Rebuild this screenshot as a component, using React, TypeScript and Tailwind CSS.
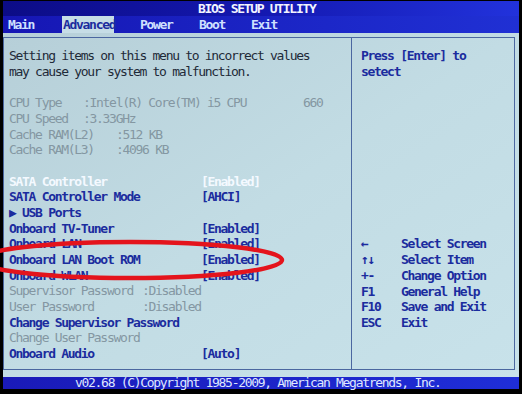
import React from 'react';

const font = "font-['DejaVu_Sans_Mono','Liberation_Mono',monospace] text-[13px] tracking-[-1.3px]";

const Row: React.FC<{ label: string; value?: string; tone?: 'blue' | 'gray' | 'white' }> = ({ label, value, tone = 'blue' }) => {
    const color =
        tone === 'white' ? 'text-[#f4f9ff] font-bold' : tone === 'gray' ? 'text-[#8497a2]' : 'text-[#1b2c9e] font-bold';
    return (
        <div className={`flex h-[15.7px] items-center whitespace-pre ${color}`}>
            <span className="w-[192px]">{label}</span>
            {value && <span>{value}</span>}
        </div>
    );
};

const InfoRow: React.FC<{ label: string; value: string; labelW: string; extra?: string }> = ({ label, value, labelW, extra }) => (
    <div className="flex h-[15.7px] items-center whitespace-pre text-[#8497a2]">
        <span className={labelW}>{label}</span>
        <span className={extra ? 'w-[220px]' : ''}>{value}</span>
        {extra && <span>{extra}</span>}
    </div>
);

const helpKeys: [string, string][] = [
    ['←', 'Select Screen'],
    ['↑↓', 'Select Item'],
    ['+-', 'Change Option'],
    ['F1', 'General Help'],
    ['F10', 'Save and Exit'],
    ['ESC', 'Exit'],
];

export default function App() {
    return (
        <div className={`relative w-[522px] h-[394px] bg-black overflow-hidden ${font}`}>
            <div className="ml-[3px] w-[516px] pt-[1px] flex flex-col">
                {/* title */}
                <div className="h-[15px] bg-gradient-to-r from-[#0c0c86] via-[#1418b0] to-[#2232dc] flex items-center pl-[195px] text-[#f2f4ff] font-bold">
                    BIOS SETUP UTILITY
                </div>
                {/* menu */}
                <div className="h-[17px] bg-gradient-to-r from-[#1616b4] to-[#2030d4] flex items-stretch text-[#cfe0ff] font-bold">
                    <span className="w-[59px] pl-[5px] flex items-center">Main</span>
                    <span className="w-[78px] flex items-stretch">
                        <span className="bg-[#c6dde6] text-[#1b2c9e] px-[1px] flex items-center w-[52px]">Advanced</span>
                    </span>
                    <span className="w-[59px] flex items-center">Power</span>
                    <span className="w-[52px] flex items-center">Boot</span>
                    <span className="flex items-center">Exit</span>
                </div>
                {/* body */}
                <div className="h-[344px] bg-gradient-to-br from-[#b6cfd8] via-[#c2dce4] to-[#c8e2ea] pt-[4px] pr-[4px]">
                    <div className="h-[333px] border border-[#4b67a0] flex">
                        <div className="w-[348px] border-r border-[#4b67a0] pl-[5px] pt-[10px]">
                            <div className="text-[#1e2a38]">
                                <div className="h-[15.7px] flex items-center whitespace-pre">Setting items on this menu to incorrect values</div>
                                <div className="h-[15.7px] flex items-center whitespace-pre">may cause your system to malfunction.</div>
                            </div>
                            <div className="h-[15.7px]" />
                            <InfoRow label="CPU Type" value=":Intel(R) Core(TM) i5 CPU" labelW="w-[74px]" extra="660" />
                            <InfoRow label="CPU Speed" value=":3.33GHz" labelW="w-[74px]" />
                            <InfoRow label="Cache RAM(L2)" value=":512 KB" labelW="w-[107px]" />
                            <InfoRow label="Cache RAM(L3)" value=":4096 KB" labelW="w-[107px]" />
                            <div className="h-[15.7px]" />
                            <Row label="SATA Controller" value="[Enabled]" tone="white" />
                            <Row label="SATA Controller Mode" value="[AHCI]" />
                            <Row label="▶ USB Ports" />
                            <Row label="Onboard TV-Tuner" value="[Enabled]" />
                            <Row label="Onboard LAN" value="[Enabled]" />
                            <Row label="Onboard LAN Boot ROM" value="[Enabled]" />
                            <Row label="Onboard WLAN" value="[Enabled]" />
                            <InfoRow label="Supervisor Password" value=":Disabled" labelW="w-[133px]" />
                            <InfoRow label="User Password" value=":Disabled" labelW="w-[133px]" />
                            <Row label="Change Supervisor Password" />
                            <Row label="Change User Password" tone="gray" />
                            <Row label="Onboard Audio" value="[Auto]" />
                        </div>
                        <div className="flex-1 pl-[9px] pt-[10px] text-[#1b2c9e] font-bold">
                            <div className="h-[15.7px] flex items-center whitespace-pre">Press [Enter] to</div>
                            <div className="h-[15.7px] flex items-center">setect</div>
                            <div className="h-[157px]" />
                            {helpKeys.map(([k, v]) => (
                                <div key={k} className="h-[15.7px] flex items-center whitespace-pre">
                                    <span className="w-[40px]">{k}</span>
                                    <span>{v}</span>
                                </div>
                            ))}
                        </div>
                    </div>
                </div>
                {/* footer */}
                <div className="h-[12px] bg-gradient-to-r from-[#1a1ab8] to-[#1f2ed8] flex items-center pl-[72px] text-[#dfe6ff] whitespace-pre">
                    v02.68 (C)Copyright 1985-2009, American Megatrends, Inc.
                </div>
            </div>
            {/* red marker */}
            <svg className="absolute left-0 top-0 pointer-events-none" width="522" height="394">
                <ellipse cx="130" cy="260" rx="152" ry="18" fill="none" stroke="#e4141c" strokeWidth="4.5" />
            </svg>
        </div>
    );
}
